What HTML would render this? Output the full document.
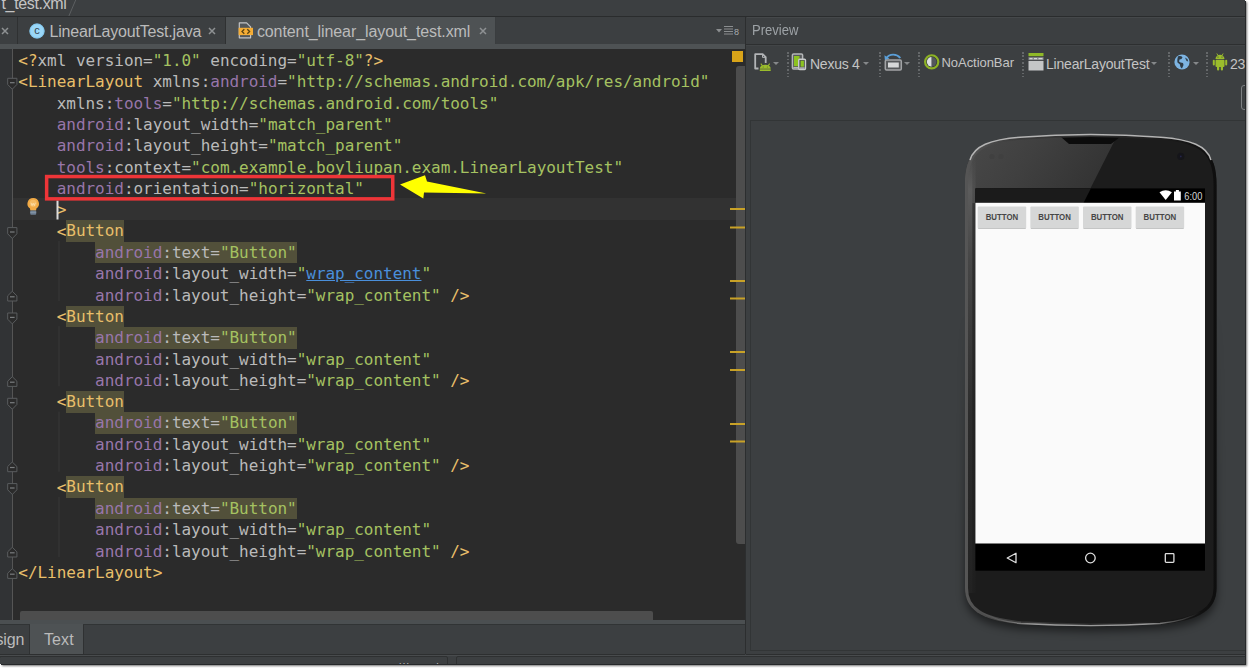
<!DOCTYPE html>
<html>
<head>
<meta charset="utf-8">
<title>content_linear_layout_test.xml</title>
<style>
html,body{margin:0;padding:0;background:#fff;}
body{width:1249px;height:668px;position:relative;overflow:hidden;font-family:"Liberation Sans",sans-serif;}
#app{position:absolute;left:0;top:0;width:1245px;height:664px;background:#3c3f41;overflow:hidden;box-shadow:1px 1px 0 #26282a,2px 2px 2px rgba(0,0,0,.55);}
.abs{position:absolute;}
/* top breadcrumb */
#crumb{left:0;top:0;width:1244px;height:16px;background:#3c3f41;}
#crumbline{left:0;top:16px;width:1244px;height:1px;background:#2b2d2e;}
#crumbtxt{left:1.500px;top:-5px;font-size:16px;color:#c4c4c4;white-space:nowrap;letter-spacing:-0.350px;}
/* tab bar */
#tabbar{left:0;top:17px;width:745px;height:28px;background:#3c3f41;}
.tab{position:absolute;top:17px;height:27px;box-sizing:border-box;border-right:1px solid #2f3132;}
.tabtxt{position:absolute;font-size:16px;color:#bbbbbb;white-space:nowrap;top:23.400px;line-height:18px;letter-spacing:-0.250px;}
.tabx{position:absolute;color:#7b7e80;font-size:13px;line-height:13px;top:25px;}
#tabunder{left:0;top:44px;width:745px;height:4.600px;z-index:2;background:#4e5254;}
#tabunder2{left:0;top:47px;width:745px;height:1px;background:#3a3d3f;}
/* editor */
#editor{left:0;top:48px;width:745px;height:572px;background:#2b2b2b;overflow:hidden;}
#gutter{left:0;top:0;width:12px;height:572px;background:#313335;}
#gutline{left:12px;top:0;width:1px;height:572px;background:#555555;}
#curline{left:13px;top:150.200px;width:723px;height:21.400px;background:#323232;}
#code{left:18.300px;top:2.100px;letter-spacing:-0.035px;font-family:"DejaVu Sans Mono","Liberation Mono",monospace;font-size:16px;line-height:21.333px;color:#a9b7c6;white-space:pre;margin:0;}
.t{color:#e8bf6a;}
.a{color:#bababa;}
.n{color:#9876aa;}
.s{color:#a5c261;}
.u{color:#4a8fdb;text-decoration:underline;}

/* highlight full line height */
.h{background:#52503a;padding:1.4px 0 1.4px 0;}
/* preview panel */
#split{left:744.800px;top:17px;width:1.700px;height:637px;background:#2c2e2f;}
#pvhead{left:746px;top:17px;width:499px;height:27px;background:#3c3f41;}
#pvheadline{left:746px;top:44px;width:499px;height:1px;background:#2d2f30;}
#pvheadline2{left:746px;top:45px;width:499px;height:1px;background:#424547;}
#pvtitle{left:752px;top:21px;font-size:14.5px;line-height:18px;color:#9da2a6;white-space:nowrap;transform:scaleX(0.9);transform-origin:0 0;}
.tbt{position:absolute;font-size:14px;line-height:18px;color:#c4c4c4;white-space:nowrap;top:54.500px;letter-spacing:-0.250px;}
.sep{position:absolute;top:52px;width:1.500px;height:24.500px;margin-left:0;background:repeating-linear-gradient(to bottom,#65686a 0,#65686a 1.600px,transparent 1.600px,transparent 3.430px);}
.dd{position:absolute;top:61.700px;margin-left:0.500px;width:0;height:0;border-left:3px solid transparent;border-right:3px solid transparent;border-top:3.600px solid #85888a;}
#surface{left:749.500px;top:120px;width:496px;height:531px;box-sizing:border-box;border-left:1px solid #323536;border-top:1px solid #323536;border-bottom:1px solid #323536;background:#3c3f41;}
#surfbot{left:746px;top:654px;width:499px;height:1px;background:#2c2e2f;}
#surfbot2{left:0;top:655px;width:1245px;height:1px;background:#484b4d;}
/* bottom */
#hscroll{left:20px;top:563px;width:633px;height:9px;background:#4d4d4d;border-radius:2px 2px 0 0;}
#vscroll{left:736px;top:18px;width:9px;height:478px;background:#4d4d4d;border-radius:3px 0 0 3px;}
#edbot{left:0;top:620px;width:745px;height:4.600px;background:#4b4f51;}
#btabs{left:0;top:624px;width:745px;height:31px;background:#3c3f41;box-sizing:border-box;border-top:1px solid #313435;border-bottom:1px solid #2d2f30;}
#bt1{left:0;top:625px;width:30px;height:29px;background:#3c3f41;border-right:1px solid #2f3132;box-sizing:border-box;}
#bt2{left:30px;top:624px;width:53px;height:30px;background:#4e5254;}
#bt2r{left:83px;top:625px;width:1px;height:29px;background:#2f3132;}
.btt{position:absolute;font-size:16px;line-height:18px;color:#bbbbbb;white-space:nowrap;top:630.700px;letter-spacing:-0.2px;}
#stat1{left:-1px;top:656px;width:449px;height:12px;box-sizing:border-box;border:1px solid #2e3031;border-radius:2px;}
#stat2{left:456px;top:656px;width:800px;height:12px;box-sizing:border-box;border:1px solid #2e3031;border-radius:2px;}
#stattxt{left:399px;top:660.500px;font-size:11px;line-height:12px;color:#bbbbbb;white-space:pre;letter-spacing:1.300px;}
</style>
</head>
<body>
<div id="app">
  <div id="crumb" class="abs"></div>
  <div id="crumbline" class="abs"></div>
  <div id="crumbtxt" class="abs">t_test.xml</div>
  <svg class="abs" style="left:66px;top:0;" width="12" height="16" viewBox="0 0 12 16"><path d="M9.700,0 L2.900,16" stroke="#5c5f61" stroke-width="1" fill="none"/></svg>

  <div id="tabbar" class="abs"></div>

  <!-- tabs -->
  <div class="abs" style="left:0;top:16px;width:1245px;height:1px;background:#2a2c2d;"></div>
  <div class="tab" style="left:0;width:18px;"></div>
  <svg class="abs" style="left:0.7999999999999998px;top:27px;" width="8" height="8" viewBox="0 0 8 8"><path d="M1,1 L7,7 M7,1 L1,7" stroke="#8e9193" stroke-width="1.500" fill="none"/></svg>
  <div class="tab" style="left:18px;width:208px;"></div>
  <svg class="abs" style="left:29px;top:23px;" width="16" height="16" viewBox="0 0 16 16"><circle cx="8" cy="8" r="7.600" fill="#9ad7f8"/><circle cx="8" cy="8" r="7.100" fill="none" stroke="#6fb9e2" stroke-width="1" opacity=".6"/><text x="8" y="11.300" font-family="Liberation Sans, sans-serif" font-size="11" text-anchor="middle" fill="#36444d">c</text></svg>
  <div class="tabtxt" style="left:49.500px;letter-spacing:-0.190px;">LinearLayoutTest.java</div>
  <svg class="abs" style="left:208.4px;top:27px;" width="8" height="8" viewBox="0 0 8 8"><path d="M1,1 L7,7 M7,1 L1,7" stroke="#8e9193" stroke-width="1.500" fill="none"/></svg>
  <div class="tab" style="left:226px;width:270px;background:#4e5254;height:28px;border-right:1px solid #3a3d3f;"></div>
  <svg class="abs" style="left:238px;top:22px;" width="16" height="17" viewBox="238 22 16 17"><path d="M239.300,22.800 h7.300 l4,4 v11 h-11.300 z" fill="#53575a" stroke="#c2c4c6" stroke-width="1.200" stroke-linejoin="round"/><rect x="238.600" y="27.800" width="14.400" height="7.300" fill="#f5ad36"/><path d="M244.300,29.200 L242,31.450 L244.300,33.700 M247.300,29.200 L249.600,31.450 L247.300,33.700" fill="none" stroke="#5a4312" stroke-width="1.300"/></svg>
  <div class="tabtxt" style="left:256.900px;letter-spacing:-0.090px;">content_linear_layout_test.xml</div>
  <svg class="abs" style="left:478.5px;top:27px;" width="8" height="8" viewBox="0 0 8 8"><path d="M1,1 L7,7 M7,1 L1,7" stroke="#8e9193" stroke-width="1.500" fill="none"/></svg>
  <svg class="abs" style="left:715px;top:24px;" width="27" height="14" viewBox="0 0 27 14"><path d="M1 5h6l-3 3.500z" fill="#8b8e90"/><path d="M9 2.500h9M9 5h9M9 7.500h9M9 10h9" stroke="#8b8e90" stroke-width="1.200"/><text x="19" y="10.500" font-family="Liberation Sans, sans-serif" font-size="9" fill="#a9acae">8</text></svg>
  <div class="abs" style="left:0;top:43.500px;width:226px;height:1px;background:#303334;"></div>
  <div class="abs" style="left:496px;top:43.500px;width:249px;height:1px;background:#303334;"></div>
  <div id="tabunder" class="abs"></div>

  <div id="editor" class="abs">
    <div id="gutter" class="abs"></div>
    <div id="gutline" class="abs"></div>
    <div id="curline" class="abs"></div>

    <div id="vscroll" class="abs"></div>
    <div id="hscroll" class="abs"></div>
    <div class="abs" style="left:732px;top:3px;width:11px;height:11px;background:#d9a419;"></div>
<pre id="code" class="abs"><span class="t">&lt;?</span><span class="a">xml version=</span><span class="s">"1.0"</span><span class="a"> encoding=</span><span class="s">"utf-8"</span><span class="t">?&gt;</span>
<span class="t">&lt;LinearLayout</span> <span class="a">xmlns:</span><span class="n">android</span><span class="a">=</span><span class="s">"http://schemas.android.com/apk/res/android"</span>
    <span class="a">xmlns:</span><span class="n">tools</span><span class="a">=</span><span class="s">"http://schemas.android.com/tools"</span>
    <span class="n">android</span><span class="a">:layout_width</span><span class="a">=</span><span class="s">"match_parent"</span>
    <span class="n">android</span><span class="a">:layout_height</span><span class="a">=</span><span class="s">"match_parent"</span>
    <span class="n">tools</span><span class="a">:context</span><span class="a">=</span><span class="s">"com.example.boyliupan.exam.LinearLayoutTest"</span>
    <span class="n">android</span><span class="a">:orientation</span><span class="a">=</span><span class="s">"horizontal"</span>
    <span class="t">&gt;</span>
    <span class="t">&lt;<span class="h">Button</span></span>
        <span class="h"><span class="n">android</span><span class="a">:text</span><span class="a">=</span><span class="s">"Button"</span></span>
        <span class="n">android</span><span class="a">:layout_width</span><span class="a">=</span><span class="s">"<span class="u">wrap_content</span>"</span>
        <span class="n">android</span><span class="a">:layout_height</span><span class="a">=</span><span class="s">"wrap_content"</span> <span class="t">/&gt;</span>
    <span class="t">&lt;<span class="h">Button</span></span>
        <span class="h"><span class="n">android</span><span class="a">:text</span><span class="a">=</span><span class="s">"Button"</span></span>
        <span class="n">android</span><span class="a">:layout_width</span><span class="a">=</span><span class="s">"wrap_content"</span>
        <span class="n">android</span><span class="a">:layout_height</span><span class="a">=</span><span class="s">"wrap_content"</span> <span class="t">/&gt;</span>
    <span class="t">&lt;<span class="h">Button</span></span>
        <span class="h"><span class="n">android</span><span class="a">:text</span><span class="a">=</span><span class="s">"Button"</span></span>
        <span class="n">android</span><span class="a">:layout_width</span><span class="a">=</span><span class="s">"wrap_content"</span>
        <span class="n">android</span><span class="a">:layout_height</span><span class="a">=</span><span class="s">"wrap_content"</span> <span class="t">/&gt;</span>
    <span class="t">&lt;<span class="h">Button</span></span>
        <span class="h"><span class="n">android</span><span class="a">:text</span><span class="a">=</span><span class="s">"Button"</span></span>
        <span class="n">android</span><span class="a">:layout_width</span><span class="a">=</span><span class="s">"wrap_content"</span>
        <span class="n">android</span><span class="a">:layout_height</span><span class="a">=</span><span class="s">"wrap_content"</span> <span class="t">/&gt;</span>
<span class="t">&lt;/LinearLayout&gt;</span></pre>
  </div>

  <svg class="abs" style="left:0;top:48px;" width="745" height="572" viewBox="0 48 745 572">
  <path d="M7.700,78.3 h9.200 v6.200 l-4.600,4.700 l-4.600,-4.700 z" fill="#2b2b2b" stroke="#5a5d5f" stroke-width="1"/><path d="M10,82.7 h4.600" stroke="#7a7d7f" stroke-width="1.200"/>
  <path d="M7.700,227.6 h9.200 v6.200 l-4.600,4.700 l-4.600,-4.700 z" fill="#2b2b2b" stroke="#5a5d5f" stroke-width="1"/><path d="M10,232.0 h4.600" stroke="#7a7d7f" stroke-width="1.200"/>
  <path d="M7.700,313.0 h9.200 v6.200 l-4.600,4.700 l-4.600,-4.700 z" fill="#2b2b2b" stroke="#5a5d5f" stroke-width="1"/><path d="M10,317.4 h4.600" stroke="#7a7d7f" stroke-width="1.200"/>
  <path d="M7.700,398.3 h9.200 v6.200 l-4.600,4.700 l-4.600,-4.700 z" fill="#2b2b2b" stroke="#5a5d5f" stroke-width="1"/><path d="M10,402.7 h4.600" stroke="#7a7d7f" stroke-width="1.200"/>
  <path d="M7.700,483.6 h9.200 v6.200 l-4.600,4.700 l-4.600,-4.700 z" fill="#2b2b2b" stroke="#5a5d5f" stroke-width="1"/><path d="M10,488.0 h4.600" stroke="#7a7d7f" stroke-width="1.200"/>
  <path d="M7.700,301.0 h9.200 v-5.200 l-4.600,-4.500 l-4.600,4.500 z" fill="#2b2b2b" stroke="#5a5d5f" stroke-width="1"/><path d="M10,296.8 h4.600" stroke="#7a7d7f" stroke-width="1.200"/>
  <path d="M7.700,386.4 h9.200 v-5.200 l-4.600,-4.500 l-4.600,4.500 z" fill="#2b2b2b" stroke="#5a5d5f" stroke-width="1"/><path d="M10,382.2 h4.600" stroke="#7a7d7f" stroke-width="1.200"/>
  <path d="M7.700,471.7 h9.200 v-5.200 l-4.600,-4.500 l-4.600,4.500 z" fill="#2b2b2b" stroke="#5a5d5f" stroke-width="1"/><path d="M10,467.5 h4.600" stroke="#7a7d7f" stroke-width="1.200"/>
  <path d="M7.700,557.0 h9.200 v-5.200 l-4.600,-4.500 l-4.600,4.500 z" fill="#2b2b2b" stroke="#5a5d5f" stroke-width="1"/><path d="M10,552.8 h4.600" stroke="#7a7d7f" stroke-width="1.200"/>
  <path d="M7.700,578.4 h9.200 v-5.200 l-4.600,-4.500 l-4.600,4.500 z" fill="#2b2b2b" stroke="#5a5d5f" stroke-width="1"/><path d="M10,574.2 h4.600" stroke="#7a7d7f" stroke-width="1.200"/>
  <rect x="58.500" y="241.0" width="1" height="60.0" fill="#393939"/>
  <rect x="58.500" y="326.3" width="1" height="60.0" fill="#393939"/>
  <rect x="58.500" y="411.6" width="1" height="60.0" fill="#393939"/>
  <rect x="58.500" y="497.0" width="1" height="60.0" fill="#393939"/>
  <rect x="730" y="208" width="15" height="2" fill="#c9a227"/>
  <rect x="730" y="226.5" width="15" height="2" fill="#c9a227"/>
  <rect x="730" y="280" width="15" height="2" fill="#c9a227"/>
  <rect x="730" y="297.5" width="15" height="2" fill="#c9a227"/>
  <rect x="730" y="351" width="15" height="2" fill="#c9a227"/>
  <rect x="730" y="369" width="15" height="2" fill="#c9a227"/>
  <rect x="730" y="423" width="15" height="2" fill="#c9a227"/>
  <rect x="730" y="440.5" width="15" height="2" fill="#c9a227"/>
  <rect x="56.500" y="200.500" width="2" height="19" fill="#dcdcdc"/>
  <g><path d="M33.200,198 a5.800,5.800 0 0 1 3.200,10.600 l-0.300,1.800 h-5.800 l-0.300,-1.800 a5.800,5.800 0 0 1 3.200,-10.600 z" fill="#f2aa45"/><circle cx="33.200" cy="203.300" r="3.600" fill="#f7c070" opacity="0.700"/><path d="M31,202.800 l1.100,2.800 l1.100,-2.300 l1.100,2.300 l1.100,-2.800" fill="none" stroke="#fde9c0" stroke-width="0.700"/><rect x="30.200" y="210.600" width="6" height="4.200" rx="1" fill="#6f8094"/><rect x="30.200" y="211.900" width="6" height="0.700" fill="#8e9db0"/></g>
  <rect x="46.650" y="176.550" width="346.100" height="22.300" fill="none" stroke="#ee3538" stroke-width="3.500"/>
  <path d="M400,184.500 L425,175.300 L427,181.600 L486.500,193.500 L424,192.600 L423.300,198.500 Z" fill="#ffff00"/>
  </svg>
  <!-- bottom -->
  <div id="edbot" class="abs"></div>
  <div id="btabs" class="abs"></div>
  <div id="bt1" class="abs"></div>
  <div id="bt2" class="abs"></div>
  <div id="bt2r" class="abs"></div>
  <div class="btt" style="left:-24.500px;">Design</div>
  <div class="btt" style="left:44px;letter-spacing:0.100px;">Text</div>
  <div id="stat1" class="abs"></div>
  <div id="stat2" class="abs"></div>
  <div id="stattxt" class="abs">ili      l</div>

  <!-- preview panel -->
  <div id="split" class="abs"></div>
  <div id="pvhead" class="abs"></div>
  <div id="pvheadline" class="abs"></div>
  <div id="pvheadline2" class="abs"></div>
  <div class="abs" style="left:746.500px;top:17px;width:499px;height:1px;background:#45484a;"></div>
  <div id="pvtitle" class="abs">Preview</div>
  <div id="surface" class="abs"></div>
  <div id="surfbot" class="abs"></div>
  <div id="surfbot2" class="abs"></div>

  <!-- toolbar -->
  <svg class="abs" style="left:753px;top:52px;" width="20" height="20" viewBox="753 52 20 20"><path d="M755.200,54.200 h7.500 l3,3 v11.300 h-10.500 z" fill="#3c3f41" stroke="#b2b4b6" stroke-width="1.800" stroke-linejoin="round"/><path d="M762.500,54.200 v3.200 h3.200" fill="none" stroke="#b2b4b6" stroke-width="1"/><rect x="758.500" y="63" width="13.500" height="9" fill="#3c3f41"/><path d="M760.800,63.700 l1.800,2.300 M769.700,63.700 l-1.800,2.300" stroke="#9bbd2c" stroke-width="1.100"/><path d="M759.800,68.700 a5.450,4 0 0 1 10.900,0 z" fill="#9bbd2c"/><rect x="759.800" y="69.300" width="10.900" height="1.700" fill="#9bbd2c"/><circle cx="763.200" cy="67.100" r="0.500" fill="#59701a"/><circle cx="767.300" cy="67.100" r="0.500" fill="#59701a"/></svg>
  <div class="dd" style="left:772px;"></div>
  <div class="sep" style="left:787px;"></div>
  <svg class="abs" style="left:790px;top:52px;" width="18" height="20" viewBox="790 52 18 20"><rect x="792.400" y="53.900" width="10.200" height="15" rx="1.200" fill="#55585a" stroke="#b4b6b8" stroke-width="1.500"/><rect x="794" y="56" width="5.500" height="10.200" fill="#8cc220"/><rect x="798.700" y="59.200" width="6.800" height="10.300" rx="1" fill="#4a4d4f" stroke="#c9cbcc" stroke-width="1.400"/><rect x="800.600" y="60.700" width="3.300" height="6" fill="#8cc220"/><rect x="799.600" y="67.400" width="5" height="1.300" fill="#c9cbcc"/><rect x="793.300" y="67" width="5" height="1.200" fill="#b4b6b8"/></svg>
  <div class="tbt" style="left:810px;">Nexus 4</div>
  <div class="dd" style="left:862px;"></div>
  <div class="sep" style="left:879px;"></div>
  <svg class="abs" style="left:883px;top:52px;" width="20" height="20" viewBox="883 52 20 20"><path d="M886.300,58.200 C889.500,53.600 896.500,53.400 900.300,58" fill="none" stroke="#5b9fd8" stroke-width="1.900"/><path d="M884.400,55.200 l0.500,5 l4.600,-1.800 z" fill="#5b9fd8"/><rect x="885.300" y="60.100" width="16" height="9.800" rx="1.200" fill="#55585a" stroke="#a2a4a6" stroke-width="1.500"/><rect x="888" y="62.500" width="10.800" height="5" fill="#d6d8d9"/></svg>
  <div class="dd" style="left:903px;"></div>
  <div class="sep" style="left:918px;"></div>
  <svg class="abs" style="left:923px;top:53px;" width="18" height="18" viewBox="923 53 18 18"><circle cx="931.700" cy="61.850" r="6.600" fill="#34373a" stroke="#8db224" stroke-width="2.200"/><path d="M931.700,57 a4.850,4.850 0 0 0 0,9.700 z" fill="#dcdedf"/><path d="M931.700,57 a4.850,4.850 0 0 1 0,9.700 z" fill="#53575c"/></svg>
  <div class="tbt" style="left:941.500px;font-size:13px;letter-spacing:-0.050px;top:54.300px;">NoActionBar</div>
  <div class="sep" style="left:1022px;"></div>
  <svg class="abs" style="left:1028px;top:53px;" width="16" height="18" viewBox="0 0 16 18"><rect x="0.500" y="0" width="15" height="3.200" fill="#8fb928"/><rect x="0.500" y="4.200" width="15" height="3" fill="#8a8d8f"/><rect x="1.500" y="5" width="3" height="1.200" fill="#d4d6d7"/><rect x="6" y="5" width="3" height="1.200" fill="#d4d6d7"/><rect x="10.500" y="5" width="4" height="1.200" fill="#d4d6d7"/><rect x="0.500" y="8" width="15" height="9.500" fill="#c4c6c7"/></svg>
  <div class="tbt" style="left:1046px;letter-spacing:-0.200px;">LinearLayoutTest</div>
  <div class="dd" style="left:1150px;"></div>
  <div class="sep" style="left:1168px;"></div>
  <svg class="abs" style="left:1174px;top:54px;" width="16" height="16" viewBox="0 0 16 16"><circle cx="8" cy="8" r="7.600" fill="#7db4e2"/><path d="M4 2.500c2-.8 3.500-.3 4.500.8l-1 1.700-2 .500-.5 2 1.500 1 2.500.500.500 2-1.500 3.500c-1.500-1-2-2.500-2-4l-2.500-2c-.5-2 .0-4.500 .5-6z" fill="#2f3c47"/><path d="M11 3.500l2.500 1.500.8 2.500-1.800-.5z" fill="#33424d"/></svg>
  <div class="dd" style="left:1192px;"></div>
  <div class="sep" style="left:1206px;"></div>
  <svg class="abs" style="left:1212px;top:53px;" width="16" height="18" viewBox="0 0 16 18"><path d="M3.500 6a4.500 4.300 0 0 1 9 0z" fill="#9bbd2c"/><path d="M4.800 0.500l1.400 2.200M11.200 0.500l-1.400 2.200" stroke="#9bbd2c" stroke-width="0.900"/><rect x="3.500" y="6.700" width="9" height="7.300" rx="1" fill="#9bbd2c"/><rect x="0.800" y="6.700" width="2" height="5.800" rx="1" fill="#9bbd2c"/><rect x="13.200" y="6.700" width="2" height="5.800" rx="1" fill="#9bbd2c"/><rect x="5" y="13" width="2.200" height="4.500" rx="1" fill="#9bbd2c"/><rect x="8.800" y="13" width="2.200" height="4.500" rx="1" fill="#9bbd2c"/><circle cx="6" cy="4" r=".6" fill="#3c3f41"/><circle cx="10" cy="4" r=".6" fill="#3c3f41"/></svg>
  <div class="tbt" style="left:1230px;">23</div>
  <div class="abs" style="left:1241px;top:85px;width:8px;height:25px;box-sizing:border-box;border:1px solid #7d8082;border-radius:3px;"></div>

  <!-- phone -->
  <svg class="abs" style="left:940px;top:120px;" width="305" height="535" viewBox="940 120 305 535">
    <defs>
      <linearGradient id="gloss" x1="0" y1="0" x2="1" y2="0.350">
        <stop offset="0" stop-color="#4a4a4a"/><stop offset="0.500" stop-color="#404040"/><stop offset="1" stop-color="#333333"/>
      </linearGradient>
      <linearGradient id="rim" x1="0" y1="0" x2="1" y2="0">
        <stop offset="0" stop-color="#565656"/><stop offset="0.200" stop-color="#3c3c3c"/><stop offset="0.600" stop-color="#2a2a2a"/><stop offset="0.900" stop-color="#141414"/><stop offset="1" stop-color="#0e0e0e"/>
      </linearGradient>
      <linearGradient id="lstrip" x1="0" y1="0" x2="0" y2="1">
        <stop offset="0" stop-color="#5c5c5c" stop-opacity="0"/><stop offset="0.090" stop-color="#5c5c5c" stop-opacity="1"/><stop offset="0.250" stop-color="#464646"/><stop offset="0.600" stop-color="#2c2c2c"/><stop offset="1" stop-color="#222222"/>
      </linearGradient>
      <linearGradient id="hl" x1="0" y1="0" x2="1" y2="0">
        <stop offset="0" stop-color="#8a8a8a" stop-opacity="0"/><stop offset="0.250" stop-color="#9a9a9a" stop-opacity="1"/><stop offset="0.750" stop-color="#9a9a9a" stop-opacity="1"/><stop offset="1" stop-color="#8a8a8a" stop-opacity="0"/>
      </linearGradient>
      <linearGradient id="shfade" x1="0" y1="0" x2="0" y2="1"><stop offset="0.350" stop-color="#fff" stop-opacity="0"/><stop offset="0.850" stop-color="#fff" stop-opacity="1"/></linearGradient>
      <mask id="shmask" maskUnits="userSpaceOnUse" x="940" y="120" width="305" height="535"><rect x="940" y="120" width="305" height="535" fill="url(#shfade)"/></mask>
      <clipPath id="bodyclip"><path d="M965,185 C965,152 978,140 1020,136.700 Q1055,134 1090.500,134 Q1126,134 1161,136.700 C1203,140 1216.500,152 1216.500,185 L1216.500,588 C1216.500,609 1201,620.500 1160,624.300 Q1125,626.400 1090.500,626.400 Q1056,626.400 1021,624.300 C980,620.500 965,609 965,588 Z"/></clipPath>
      <filter id="blur6" x="-10%" y="-10%" width="120%" height="120%"><feGaussianBlur stdDeviation="4.500"/></filter>
      <filter id="blur1" x="-5%" y="-5%" width="110%" height="110%"><feGaussianBlur stdDeviation="0.500"/></filter>
    </defs>
    <path d="M965,185 C965,152 978,140 1020,136.700 Q1055,134 1090.500,134 Q1126,134 1161,136.700 C1203,140 1216.500,152 1216.500,185 L1216.500,588 C1216.500,609 1201,620.500 1160,624.300 Q1125,626.400 1090.500,626.400 Q1056,626.400 1021,624.300 C980,620.500 965,609 965,588 Z" transform="translate(0,5)" fill="#000" opacity="0.500" filter="url(#blur6)" mask="url(#shmask)"/>
    <path d="M965,185 C965,152 978,140 1020,136.700 Q1055,134 1090.500,134 Q1126,134 1161,136.700 C1203,140 1216.500,152 1216.500,185 L1216.500,588 C1216.500,609 1201,620.500 1160,624.300 Q1125,626.400 1090.500,626.400 Q1056,626.400 1021,624.300 C980,620.500 965,609 965,588 Z" fill="#1c1c1c"/>
    <g clip-path="url(#bodyclip)">
      <path d="M960,130 L1120,130 L1083,203 L960,203 Z" fill="url(#gloss)"/>
      <rect x="965" y="150" width="7.500" height="443" fill="url(#lstrip)"/><rect x="972.500" y="150" width="3" height="443" fill="url(#lstrip)" opacity="0.450"/>
      <path d="M1061,137 L1120,137 L1111,144 L1069,144 Z" fill="#0c0c0c"/>
      <circle cx="1180.800" cy="156.400" r="3.600" fill="#15151a"/><circle cx="1180.800" cy="156.400" r="0.900" fill="#24244a"/>
      <circle cx="992" cy="156.500" r="2.600" fill="#404040"/><circle cx="1001" cy="156.500" r="2.600" fill="#404040"/>
      <path d="M965,185 C965,152 978,140 1020,136.700 Q1055,134 1090.500,134 Q1126,134 1161,136.700 C1203,140 1216.500,152 1216.500,185 L1216.500,588 C1216.500,609 1201,620.500 1160,624.300 Q1125,626.400 1090.500,626.400 Q1056,626.400 1021,624.300 C980,620.500 965,609 965,588 Z" fill="none" stroke="url(#rim)" stroke-width="6"/>
    </g>
    <path d="M970,160 C974,146 990,139.500 1020,137.200 Q1055,134.600 1090.500,134.600 Q1126,134.600 1161,137.200 C1191,139.500 1207,146 1211,160" fill="none" stroke="#b4b4b4" stroke-width="1.500" filter="url(#blur1)"/>
    <path d="M965.600,170 L965.600,580" fill="none" stroke="#707070" stroke-width="1.200" filter="url(#blur1)"/>
    <path d="M1216,170 L1216,585" fill="none" stroke="#3e3e3e" stroke-width="1" filter="url(#blur1)"/>
    <path d="M980,611.500 C992,619 1008,622.300 1021,623.500 Q1056,625.600 1090.500,625.600 Q1125,625.600 1160,623.500 C1173,622.300 1189,619 1201,611.500" fill="none" stroke="url(#hl)" stroke-width="1.400" filter="url(#blur1)"/>
    <!-- screen -->
    <rect x="975.400" y="188.400" width="229.600" height="382.300" fill="#000"/>
    <path d="M975.400,188.400 L1090.800,188.400 L1083.500,203 L975.400,203 Z" fill="#1b1b1b"/>
    <rect x="975.400" y="202.800" width="229.600" height="340.700" fill="#fafafa"/>
    <!-- status icons -->
    <path d="M1159.500,192.300 Q1165.700,188.300 1171.900,192.300 L1165.700,200.100 Z" fill="#fff"/>
    <path d="M1174,191.600 h1.900 v-1.500 h3 v1.500 h1.900 v9 h-6.800 z" fill="#fff"/>
    <text x="1184.300" y="199.900" font-family="Liberation Sans, sans-serif" font-size="11" fill="#d6d6d6" textLength="18" lengthAdjust="spacingAndGlyphs">6:00</text>
    <!-- buttons -->
    <g font-family="Liberation Sans, sans-serif" font-size="8.600" font-weight="bold" fill="#464646" text-anchor="middle">
      <rect x="977.70" y="206.600" width="48.500" height="22" rx="1" fill="#d6d7d7"/><rect x="978.20" y="228.100" width="47.500" height="0.900" fill="#c0c1c1"/>
      <text x="1001.95" y="220.100" textLength="32.600" lengthAdjust="spacingAndGlyphs">BUTTON</text>
      <rect x="1030.35" y="206.600" width="48.500" height="22" rx="1" fill="#d6d7d7"/><rect x="1030.85" y="228.100" width="47.500" height="0.900" fill="#c0c1c1"/>
      <text x="1054.60" y="220.100" textLength="32.600" lengthAdjust="spacingAndGlyphs">BUTTON</text>
      <rect x="1083.00" y="206.600" width="48.500" height="22" rx="1" fill="#d6d7d7"/><rect x="1083.50" y="228.100" width="47.500" height="0.900" fill="#c0c1c1"/>
      <text x="1107.25" y="220.100" textLength="32.600" lengthAdjust="spacingAndGlyphs">BUTTON</text>
      <rect x="1135.65" y="206.600" width="48.500" height="22" rx="1" fill="#d6d7d7"/><rect x="1136.15" y="228.100" width="47.500" height="0.900" fill="#c0c1c1"/>
      <text x="1159.90" y="220.100" textLength="32.600" lengthAdjust="spacingAndGlyphs">BUTTON</text>
    </g>
    <!-- nav -->
    <path d="M1016,553.300 L1016,562.700 L1007.200,558 Z" fill="none" stroke="#dedede" stroke-width="1.300" stroke-linejoin="round"/>
    <circle cx="1090.400" cy="558" r="4.800" fill="none" stroke="#dedede" stroke-width="1.300"/>
    <rect x="1165.300" y="553.700" width="8.600" height="8.600" rx="0.800" fill="none" stroke="#dedede" stroke-width="1.300"/>
  </svg>
</div>
</body>
</html>
